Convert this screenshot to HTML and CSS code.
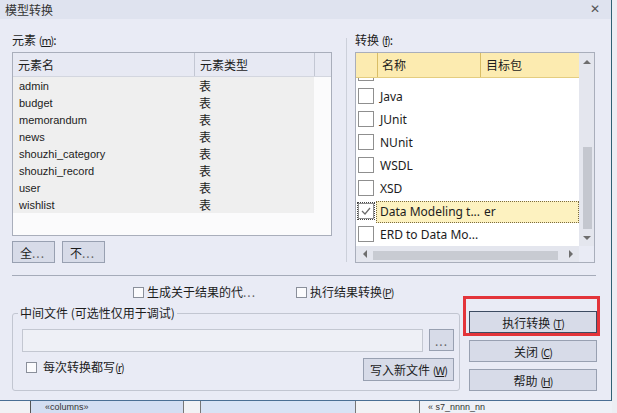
FILE: index.html
```html
<!DOCTYPE html>
<html lang="zh">
<head>
  <meta charset="UTF-8" />
  <title>模型转换</title>
  <link rel="stylesheet" href="styles.css">
</head>
<body>

<div class="dialog">
  <div class="titlebar">
    <span>模型转换</span>
    <span class="close">✕</span>
  </div>

  <div class="top">
    <div class="pane left">
      <div class="label">元素 <span class="acc">(<u>m</u>)</span>:</div>
      <div class="elist">
        <div class="ehead"><span class="c1">元素名</span><span class="c2">元素类型</span><span class="c3"></span></div>
        <div class="erows">
          <div class="erow"><span class="c1">admin</span><span class="c2">表</span></div>
          <div class="erow"><span class="c1">budget</span><span class="c2">表</span></div>
          <div class="erow"><span class="c1">memorandum</span><span class="c2">表</span></div>
          <div class="erow"><span class="c1">news</span><span class="c2">表</span></div>
          <div class="erow"><span class="c1">shouzhi_category</span><span class="c2">表</span></div>
          <div class="erow"><span class="c1">shouzhi_record</span><span class="c2">表</span></div>
          <div class="erow"><span class="c1">user</span><span class="c2">表</span></div>
          <div class="erow"><span class="c1">wishlist</span><span class="c2">表</span></div>
        </div>
      </div>
      <div class="btnrow">
        <button class="btn small">全<span class="dim">...</span></button>
        <button class="btn small">不<span class="dim">...</span></button>
      </div>
    </div>

    <div class="vline"></div>

    <div class="pane right">
      <div class="label">转换 <span class="acc">(<u>f</u>)</span>:</div>
      <div class="tlist">
        <div class="tmain">
          <div class="thead"><span class="h0"></span><span class="h1">名称</span><span class="h2">目标包</span></div>
          <div class="trows">
            <div class="trow first"><span class="chk"></span></div>
            <div class="trow"><span class="chk"></span><span class="tname">Java</span></div>
            <div class="trow"><span class="chk"></span><span class="tname">JUnit</span></div>
            <div class="trow"><span class="chk"></span><span class="tname">NUnit</span></div>
            <div class="trow"><span class="chk"></span><span class="tname">WSDL</span></div>
            <div class="trow"><span class="chk"></span><span class="tname">XSD</span></div>
            <div class="trow">
              <span class="chk on">
                <svg width="10" height="8" viewBox="0 0 10 8"><polyline points="1,4 4,7 9,1" fill="none" stroke="#6a6a6a" stroke-width="1.2"/></svg>
              </span>
              <span class="sel"><span class="tname">Data Modeling t...</span><span class="ttarget">er</span></span>
            </div>
            <div class="trow"><span class="chk"></span><span class="tname">ERD to Data Mo...</span></div>
          </div>
        </div>
        <div class="vscroll">
          <div class="arr"><span class="tri up"></span></div>
          <div class="track"><div class="thumb"></div></div>
          <div class="arr"><span class="tri down"></span></div>
        </div>
        <div class="hscroll">
          <div class="harr"><span class="tri left"></span></div>
          <div class="hthumb"></div>
          <div class="harr"><span class="tri right"></span></div>
        </div>
        <div class="corner"></div>
      </div>
    </div>
  </div>

  <div class="sep"></div>

  <div class="bottom">
    <div class="bleft">
      <div class="opts">
        <label class="opt o1"><span class="box"></span>生成关于结果的代<span class="dim">...</span></label>
        <label class="opt"><span class="box"></span>执行结果转换 <span class="acc">(<u>P</u>)</span></label>
      </div>
      <fieldset class="group">
        <legend>中间文件 (可选性仅用于调试)</legend>
        <div class="frow">
          <div class="field"></div>
          <button class="btn dots">...</button>
        </div>
        <div class="frow f2">
          <label class="opt"><span class="box"></span>每次转换都写 <span class="acc">(<u>r</u>)</span></label>
          <button class="btn write">写入新文件 <span class="acc">(<u>W</u>)</span></button>
        </div>
      </fieldset>
    </div>

    <div class="bright">
      <div class="mark">
        <button class="btn main def">执行转换 <span class="acc">(<u>T</u>)</span></button>
      </div>
      <button class="btn main close-btn">关闭 <span class="acc">(<u>C</u>)</span></button>
      <button class="btn main help-btn">帮助 <span class="acc">(<u>H</u>)</span></button>
    </div>
  </div>
</div>

<div class="behind">
  <div class="bk gap1"></div>
  <div class="bk cell1">«columns»</div>
  <div class="bk gap2"></div>
  <div class="bk cell2"></div>
  <div class="bk gap3"></div>
  <div class="bk cell3">«  s7_nnnn_nn</div>
</div>

</body>
</html>
```

FILE: styles.css
```css
* { box-sizing: border-box; }
body { margin: 0; background: #eceef3; font-family: "Noto Sans CJK SC", "Liberation Sans", sans-serif; font-size: 12px; color: #1c1c1c; }

.dialog { width: 612px; height: 401px; background: #e9ebf5; border-right: 1px solid #2f6275; border-bottom: 1px solid #4a6f94; overflow: hidden; }
.titlebar { height: 19px; background: #dfe3ef; display: flex; justify-content: space-between; align-items: center; padding: 0 11px 0 5px; color: #333; line-height: 19px; }
.close { font-family: "DejaVu Sans", sans-serif; font-size: 12px; color: #555; }

.acc { letter-spacing: -1px; font-size: 11px; }
.dim { color: #666; letter-spacing: 1px; }

.top { display: flex; margin-top: 14px; padding-left: 12px; }
.pane.left { width: 320px; }
.pane.right { width: 240px; margin-left: 8px; }
.vline { width: 1px; height: 224px; margin: 5px 0 0 14px; background: #ccd0da; }
.label { height: 14px; line-height: 14px; margin-bottom: 5px; }

.elist { height: 184px; border: 1px solid #a9aebb; background: #fbfbfc; }
.ehead { display: flex; height: 24px; background: #e7e9f3; border-bottom: 1px solid #d3d6df; line-height: 23px; }
.ehead span { border-right: 1px solid #c3c7d3; padding-left: 5px; }
.ehead .c1 { width: 182px; }
.ehead .c2 { width: 120px; }
.ehead .c3 { flex: 1; border-right: none; }
.erows { width: 301px; background: #efefef; }
.erow { display: flex; height: 17px; line-height: 18px; font-family: "Liberation Sans", sans-serif; font-size: 11px; }
.erow .c1 { width: 182px; padding-left: 6px; }
.erow .c2 { padding-left: 4px; font-family: "Noto Sans CJK SC", sans-serif; font-size: 12px; }

.btn { background: #d7dbe8; border: 1px solid #98a0b1; font-family: inherit; font-size: 12px; color: #1c1c1c; padding: 0; border-radius: 0; }
.btnrow { display: flex; gap: 7px; margin-top: 5px; }
.btn.small { width: 43px; height: 22px; text-align: left; padding-left: 7px; }

.tlist { height: 211px; border: 1px solid #a9aebb; background: #fff; display: grid; grid-template-columns: 223px 15px; grid-template-rows: 193px 16px; }
.tmain { overflow: hidden; font-family: "Noto Sans", sans-serif; font-size: 12px; }
.thead { position: relative; z-index: 1; display: flex; height: 25px; background: #fcebb0; border-bottom: 1px solid #e4cd80; line-height: 24px; font-family: "Noto Sans CJK SC", sans-serif; }
.thead .h0 { width: 22px; border-right: 1px solid #d9bd66; }
.thead .h1 { width: 103px; padding-left: 4px; border-right: 1px solid #d9bd66; }
.thead .h2 { flex: 1; padding-left: 5px; }
.trow { display: flex; align-items: flex-start; height: 23px; line-height: 22px; }
.trow.first { margin-top: -15px; }
.chk { width: 16px; height: 16px; margin: 2px 0 0 2px; border: 1px solid #8f8f8f; background: #fff; display: flex; align-items: center; justify-content: center; }
.chk.on { outline: 1px dotted #444; }
.tname { width: 104px; padding-left: 6px; white-space: nowrap; }
.sel { display: flex; margin-left: 2px; width: 203px; height: 22px; line-height: 20px; background: #fdf2c0; border: 1px dotted #7a6a40; }
.sel .tname { width: 104px; padding-left: 3px; }
.sel .ttarget { padding-left: 3px; }

.vscroll { background: #e4e6ee; display: flex; flex-direction: column; }
.arr { height: 17px; display: flex; align-items: center; justify-content: center; }
.track { flex: 1; }
.thumb { width: 9px; height: 82px; margin: 77px 0 0 4px; background: #c4c7cf; }
.hscroll { background: #e4e6ee; display: flex; align-items: center; }
.harr { width: 17px; height: 16px; display: flex; align-items: center; justify-content: center; }
.harr:last-child { width: 21px; justify-content: flex-end; padding-right: 6px; }
.hthumb { width: 185px; height: 9px; background: #c8cbd2; margin-top: 3px; }
.corner { background: #e9ebf5; }
.tri { width: 0; height: 0; }
.tri.up { border-left: 4px solid transparent; border-right: 4px solid transparent; border-bottom: 4px solid #6e6e6e; }
.tri.down { border-left: 4px solid transparent; border-right: 4px solid transparent; border-top: 4px solid #6e6e6e; }
.tri.left { border-top: 4px solid transparent; border-bottom: 4px solid transparent; border-right: 4px solid #6e6e6e; }
.tri.right { border-top: 4px solid transparent; border-bottom: 4px solid transparent; border-left: 4px solid #6e6e6e; }

.sep { height: 1px; background: #a5abb9; margin: 12px 15px 0 12px; }

.bottom { display: flex; padding-left: 12px; }
.bleft { width: 448px; }
.opts { display: flex; margin-top: 9px; padding-left: 121px; height: 14px; line-height: 14px; }
.opt { display: flex; align-items: center; white-space: nowrap; }
.o1 { width: 163px; }
.box { width: 11px; height: 11px; border: 1px solid #8a8f9a; background: #fbfbfd; margin-right: 3px; }

.group { margin: 7px 0 0; padding: 9px 5px 9px 9px; border: 1px solid #c2c6d1; border-radius: 3px; width: 448px; min-width: 0; }
.group legend { padding: 0 2px; margin-left: -4px; line-height: 14px; }
.frow { display: flex; align-items: flex-start; }
.field { width: 401px; height: 23px; background: #eef0f6; border: 1px solid #c3c7d1; }
.dots { width: 25px; height: 22px; margin-left: 6px; color: #666; letter-spacing: 1px; }
.f2 { margin-top: 6px; padding-left: 4px; }
.f2 .opt { margin-top: 2px; line-height: 14px; }
.f2 .box { margin-right: 6px; }
.write { margin-left: auto; width: 91px; height: 23px; }

.bright { width: 137px; margin-left: 3px; display: flex; flex-direction: column; align-items: flex-start; }
.mark { margin-top: 20px; border: 3px solid #e3343a; padding: 12px 0 0 3px; width: 137px; }
.btn.main { width: 128px; height: 22px; }
.btn.def { border-color: #3d4b61; }
.close-btn { margin: 4px 0 0 6px; }
.help-btn { margin: 7px 0 0 6px; }

.behind { display: flex; width: 612px; height: 12px; overflow: hidden; background: #f1f2f5; }
.bk { height: 12px; font-family: "Liberation Sans", sans-serif; font-size: 9px; line-height: 12px; color: #333; white-space: nowrap; }
.gap1 { width: 30px; }
.cell1 { width: 154px; background: #d3def2; border-left: 1px solid #555; border-right: 1px solid #777; padding-left: 14px; }
.gap2 { width: 16px; }
.cell2 { width: 156px; background: #d8e3f5; border-left: 1px solid #777; border-right: 1px solid #777; }
.gap3 { width: 64px; border-right: 1px solid #777; }
.cell3 { flex: 1; padding-left: 8px; background: #eef1f7; }
```
